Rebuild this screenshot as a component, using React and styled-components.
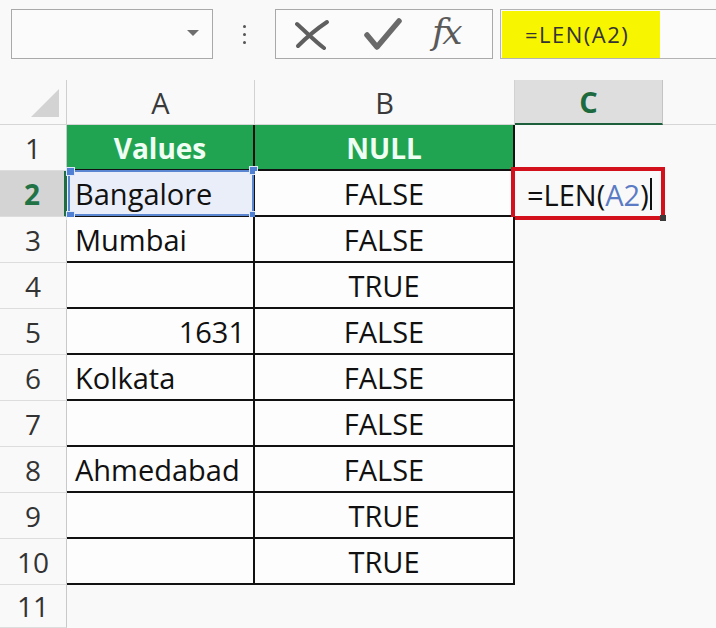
import React from 'react'
import styled, { createGlobalStyle, css } from 'styled-components'

const GlobalStyle = createGlobalStyle`
  html, body {
    margin: 0;
    padding: 0;
    background: #f9f9f9;
    font-family: "Open Sans", "Liberation Sans", sans-serif;
  }
  * { box-sizing: border-box; }
`

const rows = [
  { a: 'Values', b: 'NULL', head: true },
  { a: 'Bangalore', b: 'FALSE', selected: true },
  { a: 'Mumbai', b: 'FALSE' },
  { a: '', b: 'TRUE' },
  { a: '1631', b: 'FALSE', num: true },
  { a: 'Kolkata', b: 'FALSE' },
  { a: '', b: 'FALSE' },
  { a: 'Ahmedabad', b: 'FALSE' },
  { a: '', b: 'TRUE' },
  { a: '', b: 'TRUE' },
]

function App() {
  return (
    <>
      <GlobalStyle />
      <Page>
        <Toolbar>
          <NameBox>
            <DropArrow />
          </NameBox>
          <Dots>
            <span /><span /><span />
          </Dots>
          <ButtonsBox>
            <svg width="36" height="32" viewBox="0 0 36 32">
              <path d="M3 6 C 12 14, 22 24, 30 30" stroke="#5f5f5f" strokeWidth="4" fill="none" strokeLinecap="round" />
              <path d="M33 4 C 24 10, 12 20, 4 28" stroke="#5f5f5f" strokeWidth="4" fill="none" strokeLinecap="round" />
            </svg>
            <svg width="38" height="34" viewBox="0 0 38 34">
              <path d="M3 18 L 13 30 L 35 4" stroke="#6a6a6a" strokeWidth="5.5" fill="none" strokeLinecap="round" strokeLinejoin="round" />
            </svg>
            <Fx>fx</Fx>
          </ButtonsBox>
          <FormulaBar>
            <FormulaHighlight>=LEN(A2)</FormulaHighlight>
          </FormulaBar>
        </Toolbar>

        <Sheet>
          <Corner><CornerTriangle /></Corner>
          <ColHead>A</ColHead>
          <ColHead>B</ColHead>
          <ColHead active>C</ColHead>
          <ColFiller />

          {rows.map((r, i) => (
            <React.Fragment key={i}>
              <RowHead active={i === 1}>{i + 1}</RowHead>
              {r.head ? (
                <>
                  <HeadCell>{r.a}</HeadCell>
                  <HeadCell>{r.b}</HeadCell>
                </>
              ) : (
                <>
                  <DataCell align={r.num ? 'right' : 'left'} selected={r.selected}>
                    {r.a}
                    {r.selected && (
                      <Selection>
                        <Handle style={{ left: -4, top: -5 }} />
                        <Handle style={{ right: -6, top: -6 }} />
                        <Handle style={{ left: -4, bottom: -6 }} />
                        <Handle style={{ right: -6, bottom: -6 }} />
                      </Selection>
                    )}
                  </DataCell>
                  <DataCell align="center">{r.b}</DataCell>
                </>
              )}
              {i === 1 ? (
                <EditCell>
                  =LEN(<Ref>A2</Ref>)<Caret />
                  <RedFrame />
                  <FillHandle />
                </EditCell>
              ) : (
                <EmptyCell />
              )}
              <EmptyCell />
            </React.Fragment>
          ))}

          <RowHead>11</RowHead>
          <EmptyCell />
          <EmptyCell />
          <EmptyCell />
          <EmptyCell />
        </Sheet>
      </Page>
    </>
  )
}

const Page = styled.div`
  width: 716px;
  height: 628px;
  overflow: hidden;
  background: #f9f9f9;
`

const Toolbar = styled.div`
  height: 80px;
  display: flex;
  align-items: flex-start;
  padding-top: 9px;
`

const NameBox = styled.div`
  margin-left: 11px;
  width: 202px;
  height: 50px;
  border: 1px solid #a9a9a9;
  background: #fbfbfb;
  position: relative;
`

const DropArrow = styled.div`
  position: absolute;
  left: 175px;
  top: 20px;
  width: 0;
  height: 0;
  border-left: 6px solid transparent;
  border-right: 6px solid transparent;
  border-top: 6px solid #6e6e6e;
`

const Dots = styled.div`
  width: 62px;
  height: 50px;
  display: flex;
  flex-direction: column;
  align-items: center;
  justify-content: center;
  gap: 5px;
  span {
    width: 3px;
    height: 3px;
    border-radius: 50%;
    background: #555;
  }
`

const ButtonsBox = styled.div`
  width: 218px;
  height: 50px;
  border: 1px solid #a9a9a9;
  background: #fbfbfb;
  display: flex;
  align-items: center;
  padding-left: 18px;
  gap: 34px;
`

const Fx = styled.i`
  font-family: "DejaVu Serif", "Liberation Serif", serif;
  font-size: 36px;
  color: #5a5a5a;
  line-height: 1;
  margin-left: -4px;
  margin-top: -4px;
  letter-spacing: -3px;
`

const FormulaBar = styled.div`
  margin-left: 7px;
  flex: 1;
  height: 50px;
  border: 1px solid #b3b3b3;
  border-right: none;
  background: #fbfbfb;
  padding: 0 1px;
  display: flex;
  align-items: center;
`

const FormulaHighlight = styled.div`
  width: 158px;
  height: 47px;
  background: #f7f500;
  color: #333;
  font-size: 22px;
  letter-spacing: 1.5px;
  display: flex;
  align-items: center;
  padding-left: 23px;
`

const Sheet = styled.div`
  display: grid;
  grid-template-columns: 67px 188px 260px 148px 1fr;
  grid-template-rows: 45px repeat(10, 46px) 43px;
`

const Corner = styled.div`
  border-right: 1px solid #cfcfcf;
  border-bottom: 1px solid #d6d6d6;
  position: relative;
`

const CornerTriangle = styled.div`
  position: absolute;
  right: 7px;
  bottom: 7px;
  width: 0;
  height: 0;
  border-left: 28px solid transparent;
  border-bottom: 28px solid #d3d3d3;
`

const ColHead = styled.div`
  display: flex;
  align-items: center;
  justify-content: center;
  font-size: 29px;
  color: #3a3a3a;
  border-right: 1px solid #d2d2d2;
  border-bottom: 1px solid #d6d6d6;
  ${p => p.active && css`
    background: #dedede;
    color: #1d6a3e;
    font-weight: 700;
    border-right: 1px solid #c4c4c4;
    border-bottom: 2px solid #1d5f3a;
  `}
`

const ColFiller = styled.div`
  border-bottom: 1px solid #d6d6d6;
`

const RowHead = styled.div`
  display: flex;
  align-items: center;
  justify-content: center;
  font-size: 28px;
  color: #333;
  border-right: 1px solid #c9c9c9;
  border-bottom: 1px solid #dddddd;
  ${p => p.active && css`
    background: #d4d4d4;
    color: #217346;
    font-weight: 700;
    border-right: 3px solid #1f6e43;
  `}
`

const HeadCell = styled.div`
  background: #21a452;
  color: #effff3;
  font-size: 28px;
  font-weight: 700;
  display: flex;
  align-items: center;
  justify-content: center;
  border-right: 2px solid #111;
  border-bottom: 2px solid #111;
  padding-top: 2px;
`

const DataCell = styled.div`
  position: relative;
  background: ${p => (p.selected ? '#e9eef8' : '#fdfdfd')};
  color: #111;
  font-size: 29px;
  display: flex;
  align-items: center;
  justify-content: ${p => (p.align === 'right' ? 'flex-end' : p.align === 'center' ? 'center' : 'flex-start')};
  padding: 0 8px;
  border-right: 2px solid #111;
  border-bottom: 2px solid #111;
`

const Selection = styled.div`
  position: absolute;
  left: 1px;
  top: -1px;
  right: -1px;
  bottom: -1px;
  border: 2px solid #5a86d2;
  pointer-events: none;
`

const Handle = styled.span`
  position: absolute;
  width: 9px;
  height: 9px;
  background: #4f80d4;
  border: 1px solid #dfe8f7;
`

const EmptyCell = styled.div``

const EditCell = styled.div`
  position: relative;
  display: flex;
  align-items: center;
  padding-left: 12px;
  font-size: 29px;
  color: #111;
`

const Ref = styled.span`
  color: #5b7cc4;
`

const Caret = styled.span`
  width: 2px;
  height: 32px;
  background: #111;
  margin-left: 1px;
`

const RedFrame = styled.div`
  position: absolute;
  left: -4px;
  top: -4px;
  right: -2px;
  bottom: -3px;
  border: 4px solid #d3111c;
  pointer-events: none;
`

const FillHandle = styled.span`
  position: absolute;
  right: -3px;
  bottom: -4px;
  width: 6px;
  height: 6px;
  background: #3a3a3a;
`

export default App
